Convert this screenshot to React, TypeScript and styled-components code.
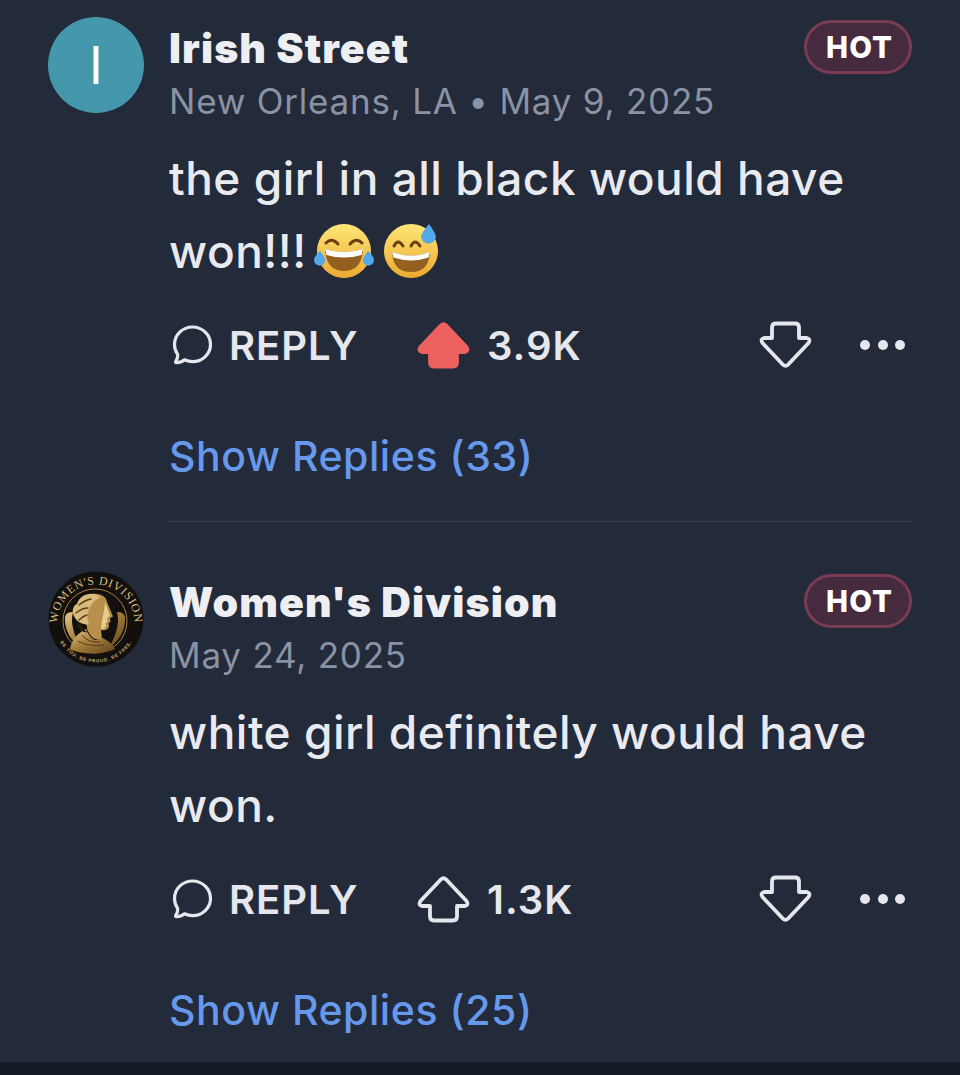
import React from "react";
import styled, { createGlobalStyle } from "styled-components";

const GlobalStyle = createGlobalStyle`
  html, body {
    margin: 0;
    padding: 0;
    background: #232a3a;
  }
  body {
    font-family: Inter, "Liberation Sans", sans-serif;
    -webkit-font-smoothing: antialiased;
  }
`;

const Page = styled.div`
  width: 960px;
  height: 1075px;
  display: flex;
  flex-direction: column;
  overflow: hidden;
  background: #232a3a;
`;

const List = styled.div`
  flex: 1;
  padding: 17px 48px 0;
`;

const Comment = styled.div`
  display: flex;
  gap: 25px;
`;

const Avatar = styled.div`
  flex: none;
  width: 96px;
  height: 96px;
  border-radius: 50%;
  background: #4597ab;
  color: #fff;
  display: flex;
  align-items: center;
  justify-content: center;
  font-size: 52px;
  font-weight: 400;
`;

const Logo = styled.svg`
  flex: none;
  width: 96px;
  height: 96px;
  overflow: visible;
`;

const Body = styled.div`
  flex: 1;
  min-width: 0;
`;

const Header = styled.div`
  display: flex;
  justify-content: space-between;
  align-items: flex-start;
  height: 57px;
  margin-top: 3px;
`;

const Name = styled.div`
  font-size: 41px;
  font-weight: 900;
  line-height: 56px;
  letter-spacing: 1.100px;
  color: #eeeff3;
`;

const Hot = styled.div`
  width: 108px;
  height: 54px;
  box-sizing: border-box;
  padding-left: 3px;
  border-radius: 27px;
  border: 3px solid #7a3c50;
  background: #462a3d;
  color: #fff;
  display: flex;
  align-items: center;
  justify-content: center;
  font-size: 29.5px;
  font-weight: 800;
  letter-spacing: 1px;
`;

const Meta = styled.div`
  font-size: 35px;
  line-height: 48px;
  font-weight: 400;
  color: #8a92a4;
  letter-spacing: 0.780px;
`;

const Text = styled.div`
  margin-top: 17px;
  font-size: 46px;
  line-height: 73px;
  font-weight: 500;
  letter-spacing: 0.500px;
  color: #e9eaef;
`;

const Emoji = styled.svg<{ $gap: number }>`
  width: 62px;
  height: 62px;
  margin-left: ${(p) => p.$gap}px;
  vertical-align: -14px;
`;

const Actions = styled.div`
  display: flex;
  align-items: center;
  height: 60px;
  margin-top: 27px;
`;

const ReplyButton = styled.div`
  display: flex;
  align-items: center;
  gap: 17px;
  width: 248px;
  padding-left: 3px;
  box-sizing: border-box;
`;

const ActionLabel = styled.span`
  font-size: 40px;
  font-weight: 600;
  letter-spacing: 1px;
  color: #e6e7ec;
`;

const Vote = styled.div`
  flex: 1;
  display: flex;
  align-items: center;
  gap: 17px;
`;

const ArrowSvg = styled.svg<{ $down?: boolean }>`
  width: 53px;
  height: 48px;
  flex: none;
  transform: ${(p) => (p.$down ? "rotate(180deg)" : "none")};
`;

const Dots = styled.div`
  display: flex;
  gap: 7.5px;
  margin-left: 48px;
  margin-right: 7px;
`;

const Dot = styled.span`
  width: 10px;
  height: 10px;
  border-radius: 50%;
  background: #e6e7ec;
`;

const ShowReplies = styled.div`
  margin-top: 51px;
  font-size: 41px;
  line-height: 60px;
  font-weight: 500;
  letter-spacing: 0.55px;
  color: #6699ec;
`;

const Divider = styled.div`
  height: 1px;
  margin: 35px 0 49px 121px;
  background: #3a4151;
`;

const BottomBar = styled.div`
  flex: none;
  height: 13px;
  background: #161b28;
`;

const BubbleIcon = () => (
  <svg width="40" height="40" viewBox="0 0 40 40" fill="none">
    <path
      d="M20.500 2C10.500 2 2.500 9.800 2.500 19.500c0 3.600 1.100 6.900 3 9.700.5 2.300-.3 5-1.800 7.300-.4.700.1 1.300.8 1.200 3.500-.3 6.300-1.300 8.100-2.900 2.400 1.200 5.100 1.900 7.900 1.900 10 0 18-7.900 18-17.200C38.500 9.800 30.500 2 20.500 2Z"
      stroke="#e6e7ec"
      strokeWidth="3.200"
      strokeLinejoin="round"
    />
  </svg>
);

const ArrowIcon = ({ filled, down }: { filled?: boolean; down?: boolean }) => (
  <ArrowSvg $down={down} viewBox="0 0 53 48" fill="none">
    <path
      d="M23.800 4.500Q26.500 1.800 29.200 4.500L49.500 26Q52 30 48 31H40V41.500Q40 45.500 36 45.500H17Q13 45.500 13 41.500V31H5Q1 30 3.500 26Z"
      fill={filled ? "#ec6060" : "none"}
      stroke={filled ? "#ec6060" : "#e6e7ec"}
      strokeWidth="3.800"
      strokeLinejoin="round"
    />
  </ArrowSvg>
);

const JoyEmoji = () => (
  <Emoji $gap={6} viewBox="0 0 62 62">
    <defs>
      <linearGradient id="joyFace" x1="0" y1="0" x2="0" y2="1">
        <stop offset="0" stopColor="#fde678" />
        <stop offset="1" stopColor="#eda92f" />
      </linearGradient>
    </defs>
    <circle cx="31" cy="31" r="27" fill="url(#joyFace)" />
    <path d="M13 23q6-6 12 1M37 24q6-7 12-1" stroke="#6b3f12" strokeWidth="3" fill="none" strokeLinecap="round" />
    <path d="M12 29q19 6 38 0q-1 22-19 22T12 29Z" fill="#94601f" />
    <path d="M12 29q19 6 38 0l-1.500 6q-17.500 5-35 0Z" fill="#fff" />
    <path d="M7 31q4 5 5 8a5.500 5.500 0 0 1-11 2q0-5 6-10Z" fill="#54a9ea" />
    <path d="M55 31q-4 5-5 8a5.500 5.500 0 0 0 11 2q0-5-6-10Z" fill="#54a9ea" />
  </Emoji>
);

const SweatEmoji = () => (
  <Emoji $gap={5} viewBox="0 0 62 62">
    <defs>
      <linearGradient id="sweatFace" x1="0" y1="0" x2="0" y2="1">
        <stop offset="0" stopColor="#fde678" />
        <stop offset="1" stopColor="#eda92f" />
      </linearGradient>
    </defs>
    <circle cx="31" cy="31" r="27" fill="url(#sweatFace)" />
    <path d="M14 26q4-8 9 0M31 26q4-8 9 0" stroke="#6b3f12" strokeWidth="3" fill="none" strokeLinecap="round" />
    <path d="M12 32q19 7 38 0q-1 20-19 20T12 32Z" fill="#94601f" />
    <path d="M12 32q19 7 38 0l-1.500 5.500q-17.500 6-35 0Z" fill="#fff" />
    <path d="M49 4q5 7 7 12a7.500 7.500 0 1 1-15 0q2-5 8-12Z" fill="#54a9ea" />
  </Emoji>
);

const DivisionLogo = () => (
  <Logo viewBox="0 0 96 96">
    <defs>
      <linearGradient id="gold" x1="0" y1="0" x2="1" y2="1">
        <stop offset="0" stopColor="#e3c688" />
        <stop offset="0.45" stopColor="#a67f3e" />
        <stop offset="1" stopColor="#5f421b" />
      </linearGradient>
      <path id="logoTop" d="M9.500 52a38.500 38.500 0 0 1 77 0" />
      <path id="logoBottom" d="M6.500 50a41.500 41.500 0 0 0 83 0" />
    </defs>
    <circle cx="48" cy="48" r="47.500" fill="#120f0d" />
    <text fontFamily="'Liberation Serif', serif" fontSize="11.800" fill="#d8bd80" letterSpacing="0.700">
      <textPath href="#logoTop" startOffset="50%" textAnchor="middle">
        WOMEN'S DIVISION
      </textPath>
    </text>
    <text fontFamily="'Liberation Sans', sans-serif" fontSize="4.600" fontWeight="700" fill="#c9ab6e" letterSpacing="0.700">
      <textPath href="#logoBottom" startOffset="50%" textAnchor="middle">
        BE YOU. BE PROUD. BE FREE.
      </textPath>
    </text>
    <circle cx="47" cy="50" r="32" fill="none" stroke="#a8854a" strokeWidth="1" />
    {/* laurel on both sides */}
    <path d="M17 46q-1 19 17 32-7-11-9-21-2-7 0-16-7 0-8 5ZM77 46q1 19-17 32 7-11 9-21 2-7 0-16 7 0 8 5Z" fill="url(#gold)" />
    {/* drapery */}
    <path d="M38 58c-7 3-15 11-16 20 11 6 33 6 45 0-2-5-7-8-12-11l-3 1c-4 3-10 0-14-10Z" fill="url(#gold)" />
    {/* face and neck */}
    <path d="M44 23c8-1 14 2 15 8l6 14.500-3 1.500.5 4-2 1 .5 3c-.5 4-4 5-8 4l1 9c-5 2-11 0-15-10l-1-16 2-16Z" fill="#b98f4c" />
    <path d="M57 31l5 14-3 2 .5 4-2 1 .5 3c-1 3-3 3-5 3l1-9 2-9Z" fill="#e8cc8e" />
    {/* hair */}
    <path d="M46 23c-8-1-15 3-17 10-3 1-5 5-4 9 1 6 6 10 11 11 2 1 4 1 5 0-2-5-2-9 0-14 2-6 5-10 11-12-2-3-4-4-6-4Z" fill="#d9bb7b" />
    <path d="M31 34q6-5 12-6M28 42q6-5 12-5M31 49q4-4 8-5" stroke="#5a3d17" strokeWidth="1.400" fill="none" strokeLinecap="round" />
    <path d="M33 52c1 4 3 7 6 9-3 1-7-1-10-6Z" fill="#2b1d0c" />
    <path d="M30 70q10 6 26 4M34 64q6 8 18 7" stroke="#5a3d17" strokeWidth="1" fill="none" />
  </Logo>
);

type CommentData = {
  name: string;
  meta: string;
  replies: number;
  votes: string;
  voted?: boolean;
  text: React.ReactNode;
  avatar: React.ReactNode;
};

const comments: CommentData[] = [
  {
    name: "Irish Street",
    meta: "New Orleans, LA • May 9, 2025",
    replies: 33,
    votes: "3.9K",
    voted: true,
    avatar: <Avatar>I</Avatar>,
    text: (
      <>
        the girl in all black would have won!!!
        <JoyEmoji />
        <SweatEmoji />
      </>
    ),
  },
  {
    name: "Women's Division",
    meta: "May 24, 2025",
    replies: 25,
    votes: "1.3K",
    avatar: <DivisionLogo />,
    text: "white girl definitely would have won.",
  },
];

const CommentRow = ({ data }: { data: CommentData }) => (
  <Comment>
    {data.avatar}
    <Body>
      <Header>
        <Name>{data.name}</Name>
        <Hot>HOT</Hot>
      </Header>
      <Meta>{data.meta}</Meta>
      <Text>{data.text}</Text>
      <Actions>
        <ReplyButton>
          <BubbleIcon />
          <ActionLabel>REPLY</ActionLabel>
        </ReplyButton>
        <Vote>
          <ArrowIcon filled={data.voted} />
          <ActionLabel>{data.votes}</ActionLabel>
        </Vote>
        <ArrowIcon down />
        <Dots>
          <Dot />
          <Dot />
          <Dot />
        </Dots>
      </Actions>
      <ShowReplies>Show Replies ({data.replies})</ShowReplies>
    </Body>
  </Comment>
);

export default function App() {
  return (
    <Page>
      <GlobalStyle />
      <List>
        <CommentRow data={comments[0]} />
        <Divider />
        <CommentRow data={comments[1]} />
      </List>
      <BottomBar />
    </Page>
  );
}
